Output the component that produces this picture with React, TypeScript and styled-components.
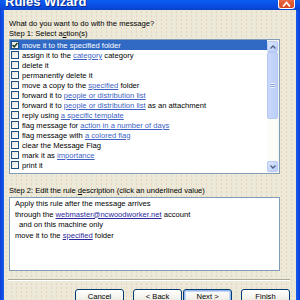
import React from "react";
import styled, { createGlobalStyle } from "styled-components";

const GlobalStyle = createGlobalStyle`
  html, body { margin: 0; padding: 0; background: #0055e5; }
  #root { width: 300px; height: 300px; overflow: hidden; }
`;

const actions: { parts: (string | { link: string })[] }[] = [
  { parts: ["move it to the specified folder"] },
  { parts: ["assign it to the ", { link: "category" }, " category"] },
  { parts: ["delete it"] },
  { parts: ["permanently delete it"] },
  { parts: ["move a copy to the ", { link: "specified" }, " folder"] },
  { parts: ["forward it to ", { link: "people or distribution list" }] },
  { parts: ["forward it to ", { link: "people or distribution list" }, " as an attachment"] },
  { parts: ["reply using ", { link: "a specific template" }] },
  { parts: ["flag message for ", { link: "action in a number of days" }] },
  { parts: ["flag message with ", { link: "a colored flag" }] },
  { parts: ["clear the Message Flag"] },
  { parts: ["mark it as ", { link: "importance" }] },
  { parts: ["print it"] },
];

function App() {
  return (
    <>
      <GlobalStyle />
      <Window>
        <TitleBar>
          <TitleText>Rules Wizard</TitleText>
          <CloseButton>
            <svg width="9" height="6" viewBox="0 0 9 6">
              <path d="M1 5.5 L4.5 1.5 L8 5.5" stroke="#fff" strokeWidth="1.8" fill="none" />
            </svg>
          </CloseButton>
        </TitleBar>
        <Body>
          <Label>What do you want to do with the message?</Label>
          <Label>
            Step 1: Select a<u>c</u>tion(s)
          </Label>
          <ListBox>
            <Rows>
              {actions.map((a, i) => (
                <Row key={i} selected={i === 0}>
                  <Check>
                    {i === 0 && (
                      <svg width="6" height="6" viewBox="0 0 6 6">
                        <path d="M0.5 3 L2.3 4.8 L5.5 1" stroke="#1e3a1e" strokeWidth="1.5" fill="none" />
                      </svg>
                    )}
                  </Check>
                  <span>
                    {a.parts.map((p, j) =>
                      typeof p === "string" ? (
                        <React.Fragment key={j}>{p}</React.Fragment>
                      ) : (
                        <Link key={j}>{p.link}</Link>
                      )
                    )}
                  </span>
                </Row>
              ))}
            </Rows>
            <ScrollBar>
              <ScrollArrow>
                <svg width="6" height="4" viewBox="0 0 6 4">
                  <path d="M0.5 3.5 L3 1 L5.5 3.5" stroke="#4d6185" strokeWidth="1.3" fill="none" />
                </svg>
              </ScrollArrow>
              <Thumb>
                <Grip />
              </Thumb>
              <Track />
              <ScrollArrow>
                <svg width="6" height="4" viewBox="0 0 6 4">
                  <path d="M0.5 0.5 L3 3 L5.5 0.5" stroke="#4d6185" strokeWidth="1.3" fill="none" />
                </svg>
              </ScrollArrow>
            </ScrollBar>
          </ListBox>
          <Label2>
            Step 2: Edit the rule <u>d</u>escription (click an underlined value)
          </Label2>
          <DescBox>
            <DescLine>Apply this rule after the message arrives</DescLine>
            <DescLine>
              through the <DescLink>webmaster@ncwoodworker.net</DescLink> account
            </DescLine>
            <DescLine indent>and on this machine only</DescLine>
            <DescLine>
              move it to the <DescLink>specified</DescLink> folder
            </DescLine>
          </DescBox>
          <Separator />
          <ButtonRow>
            <Button>Cancel</Button>
            <Button spaced>&lt; Back</Button>
            <Button primary>Next &gt;</Button>
            <Button spaced>Finish</Button>
          </ButtonRow>
        </Body>
      </Window>
    </>
  );
}

export default App;

const Window = styled.div`
  width: 300px;
  height: 300px;
  display: flex;
  flex-direction: column;
  background: linear-gradient(90deg, #0a3fd6 0, #1a5cf0 4px, #1a5cf0 296px, #0a3fd6 300px);
  font-family: "Liberation Sans", Arial, sans-serif;
`;

const TitleBar = styled.div`
  height: 10px;
  flex: none;
  display: flex;
  align-items: flex-end;
  justify-content: space-between;
  overflow: hidden;
  background: linear-gradient(#0c5df2, #0a4ae0 70%, #0842c8);
`;

const TitleText = styled.div`
  color: #fff;
  font-weight: bold;
  font-size: 13px;
  line-height: 13px;
  margin-left: 5px;
  margin-bottom: 2px;
  text-shadow: 1px 1px #0a2a8a;
`;

const CloseButton = styled.div`
  width: 17px;
  height: 9px;
  margin-right: 5px;
  margin-bottom: 1px;
  box-sizing: border-box;
  border: 1px solid #fff;
  border-top: none;
  border-radius: 0 0 3px 3px;
  background: linear-gradient(#e96a46, #d7441c);
  display: flex;
  align-items: flex-end;
  justify-content: center;
  padding-bottom: 1px;
`;

const Body = styled.div`
  flex: 1;
  margin: 0 4px;
  padding: 9px 16px 0 5px;
  display: flex;
  flex-direction: column;
  background-color: #ece9d8;
  background-image: radial-gradient(circle, rgba(215, 170, 140, 0.35) 0.6px, transparent 0.9px);
  background-size: 5px 4px;
`;

const Label = styled.div`
  font-size: 7.6px;
  line-height: 10px;
  color: #000;
  white-space: nowrap;
`;

const Label2 = styled(Label)`
  margin-top: 12px;
  margin-bottom: 1px;
`;

const ListBox = styled.div`
  height: 135px;
  flex: none;
  box-sizing: border-box;
  border: 1px solid #7f9db9;
  background: #fff;
  display: flex;
  overflow: hidden;
`;

const Rows = styled.div`
  flex: 1;
  overflow: hidden;
`;

const Row = styled.div<{ selected?: boolean }>`
  height: 10px;
  display: flex;
  align-items: center;
  gap: 3px;
  padding-left: 1px;
  font-size: 7.6px;
  white-space: nowrap;
  color: ${(p) => (p.selected ? "#fff" : "#000")};
  background: ${(p) => (p.selected ? "#316ac5" : "transparent")};
`;

const Check = styled.div`
  width: 8px;
  height: 8px;
  flex: none;
  box-sizing: border-box;
  border: 1px solid #1c5180;
  background: linear-gradient(135deg, #e4e3dd, #fff);
  display: flex;
  align-items: center;
  justify-content: center;
`;

const Link = styled.span`
  color: #3d5fc4;
  text-decoration: underline;
`;

const ScrollBar = styled.div`
  width: 11px;
  flex: none;
  display: flex;
  flex-direction: column;
  background: #f5f4ee;
  padding: 1px 1px 1px 0;
`;

const ScrollArrow = styled.div`
  height: 11px;
  flex: none;
  box-sizing: border-box;
  border: 1px solid #b6c9f5;
  border-radius: 2px;
  background: linear-gradient(135deg, #dde7fd, #b9cdf9);
  display: flex;
  align-items: center;
  justify-content: center;
`;

const Thumb = styled.div`
  height: 67px;
  flex: none;
  box-sizing: border-box;
  border: 1px solid #b6c9f5;
  border-radius: 2px;
  background: linear-gradient(90deg, #c9d8fc, #bccefa);
  display: flex;
  align-items: center;
  justify-content: center;
`;

const Grip = styled.div`
  width: 5px;
  height: 5px;
  background: repeating-linear-gradient(#eef3fe 0 1px, #8ca6df 1px 2px);
`;

const Track = styled.div`
  flex: 1;
  background: #fbfbf8;
`;

const DescBox = styled.div`
  height: 74px;
  flex: none;
  box-sizing: border-box;
  border: 1px solid #7f9db9;
  background: #fff;
  padding: 1px 0 0 5px;
`;

const DescLine = styled.div<{ indent?: boolean }>`
  font-size: 7.6px;
  line-height: 10.5px;
  white-space: nowrap;
  color: #000;
  padding-left: ${(p) => (p.indent ? "4px" : "0")};
`;

const DescLink = styled.span`
  color: #2a2a9c;
  text-decoration: underline;
`;

const Separator = styled.div`
  margin: 8px -10px 0 -1px;
  flex: none;
  height: 0;
  border-top: 1px solid #aca899;
  border-bottom: 1px solid #fff;
`;

const ButtonRow = styled.div`
  display: flex;
  justify-content: flex-end;
  margin: 8px -10px 0 0;
  gap: 1px;
`;

const Button = styled.div<{ primary?: boolean; spaced?: boolean }>`
  width: 49px;
  height: 15px;
  flex: none;
  margin-left: ${(p) => (p.spaced ? "8px" : "0")};
  box-sizing: border-box;
  border: 1px solid #003c74;
  border-radius: 3px;
  background: linear-gradient(#fff, #f3f2ec 60%, #e3e0d3);
  box-shadow: ${(p) => (p.primary ? "inset 0 0 0 1px #97b8ec, inset 0 0 0 2px #c4d6f6" : "none")};
  font-size: 7.6px;
  display: flex;
  align-items: center;
  justify-content: center;
  color: #000;
`;
